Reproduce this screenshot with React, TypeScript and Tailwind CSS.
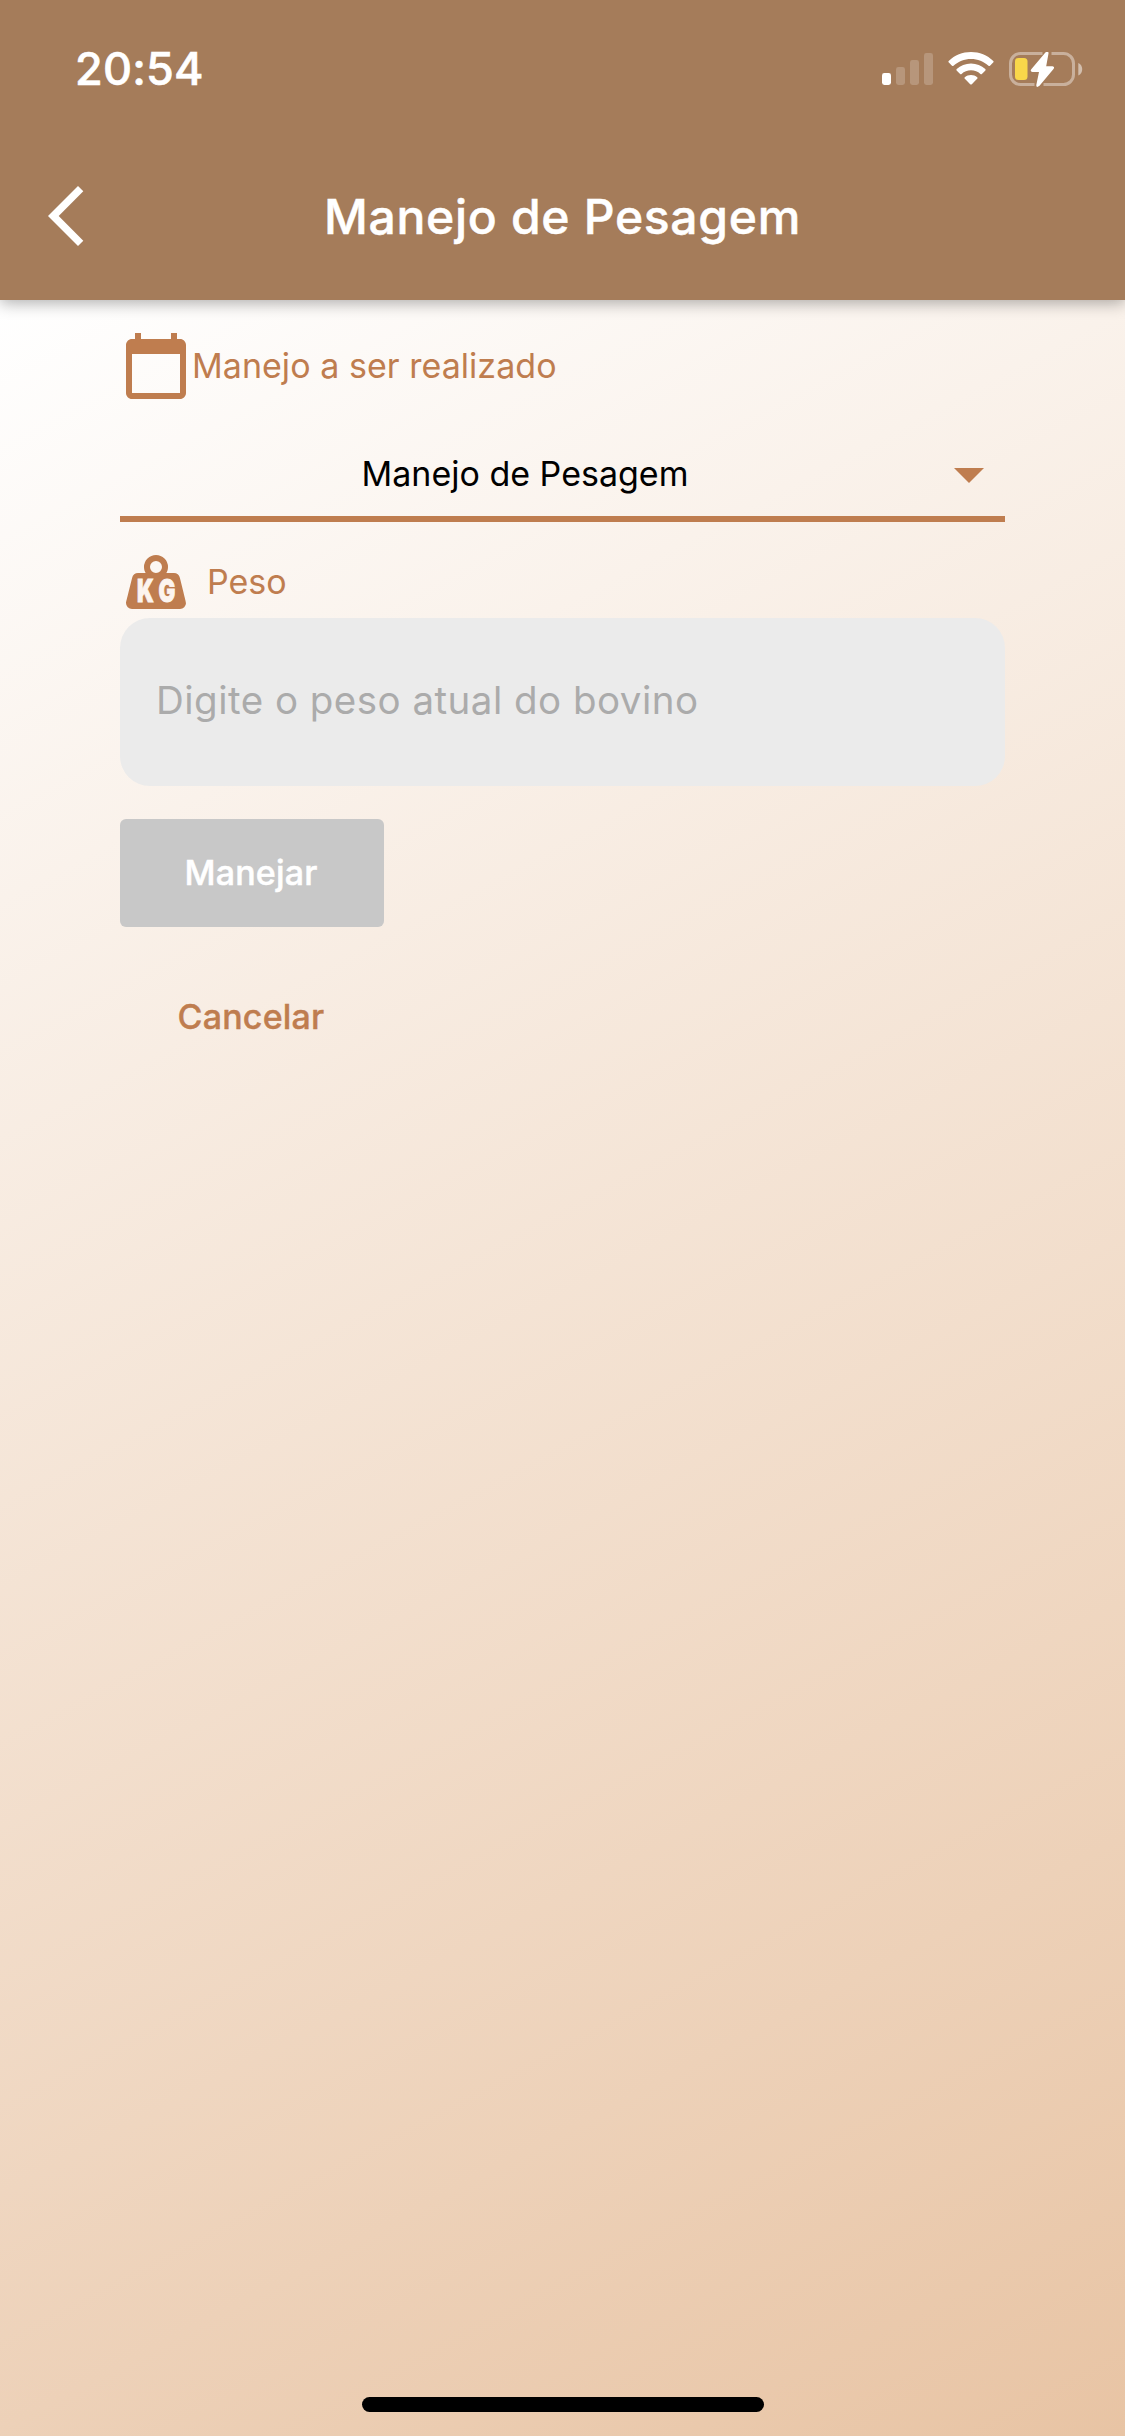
import React from "react";

function StatusIcons() {
  return (
    <div className="flex items-start">
      <svg className="mr-[14px] h-[34px] w-[52px]" viewBox="0 0 52 34">
        <rect x="0" y="21" width="9" height="12" rx="2.4" fill="#fff" />
        <g fill="#fff" fillOpacity="0.2">
          <rect x="14" y="15" width="9" height="18" rx="2.4" />
          <rect x="28" y="8" width="9" height="25" rx="2.4" />
          <rect x="42" y="1" width="9" height="32" rx="2.4" />
        </g>
      </svg>
      <svg className="mr-[14px] h-[34px] w-[47px]" viewBox="0 0 47 34" fill="#fff">
        <path d="M0.6 10.3Q0 9.6 0.7 8.9C6.8 3.2 14.5 0 23 0S39.2 3.2 45.3 8.9Q46 9.6 45.4 10.3L42 13.7Q41.3 14.4 40.5 13.7C35.8 9.4 29.7 6.9 23 6.9S10.2 9.4 5.5 13.7Q4.7 14.4 4 13.7Z" />
        <path d="M8.6 18.4Q8 17.7 8.7 17C12.5 13.5 17.5 11.4 23 11.4S33.5 13.5 37.3 17Q38 17.7 37.4 18.4L33.9 21.9Q33.2 22.5 32.4 21.9C29.9 19.6 26.6 18.3 23 18.3S16.1 19.6 13.6 21.9Q12.8 22.5 12.1 21.9Z" />
        <path d="M16.6 26.6Q16 25.9 16.8 25.3C18.5 23.9 20.6 23 23 23S27.5 23.9 29.2 25.3Q30 25.9 29.4 26.6L23.8 32.2Q23 33 22.2 32.2Z" />
      </svg>
      <svg className="h-[36px] w-[75px]" viewBox="0 0 75 36">
        <g fill="none" stroke="#fff" strokeOpacity="0.4" strokeWidth="3">
          <path d="M33.5 1.5H11.5A10 10 0 0 0 1.5 11.5V22.5A10 10 0 0 0 11.5 32.5H25.5" />
          <path d="M42.5 1.5H54.5A10 10 0 0 1 64.5 11.5V22.5A10 10 0 0 1 54.5 32.5H34.5" />
        </g>
        <path d="M69.3 11C74.5 13 74.5 21.5 69.3 23.5Z" fill="#fff" fillOpacity="0.5" />
        <rect x="6" y="6" width="12.5" height="22" rx="3.5" fill="#f9d74a" />
        <path d="M36.6 0.3Q39.7 -1.5 39.5 1.5L37.2 14.2H43.5Q46 14.6 44.5 17L30.5 33.8Q27.2 36.3 27.3 33L30 20H23.5Q20.7 19.5 22.3 17.3Z" fill="#fff" />
      </svg>
    </div>
  );
}

function BackIcon() {
  return (
    <svg className="h-[60px] w-[36px]" viewBox="0 0 36 60" fill="#fff">
      <path d="M30 0L0 30L30 60L35.3 54.7L10.7 30L35.3 5.3Z" />
    </svg>
  );
}

function CalendarIcon() {
  return (
    <svg className="size-[72px]" viewBox="0 0 24 24" fill="currentColor">
      <path d="M20 3h-1V1h-2v2H7V1H5v2H4c-1.1 0-2 .9-2 2v16c0 1.1.9 2 2 2h16c1.1 0 2-.9 2-2V5c0-1.1-.9-2-2-2zm0 18H4V8h16v13z" />
    </svg>
  );
}

function WeightIcon() {
  return (
    <svg className="size-[72px]" viewBox="0 0 24 24" fill="currentColor">
      <path d="M12 3A4 4 0 0 1 16 7C16 7.73 15.81 8.41 15.46 9H18C18.95 9 19.75 9.67 19.95 10.56C21.96 18.57 22 18.78 22 19A2 2 0 0 1 20 21H4A2 2 0 0 1 2 19C2 18.78 2.04 18.57 4.05 10.56C4.25 9.67 5.05 9 6 9H8.54C8.19 8.41 8 7.73 8 7A4 4 0 0 1 12 3M12 5A2 2 0 0 0 10 7A2 2 0 0 0 12 9A2 2 0 0 0 14 7A2 2 0 0 0 12 5Z" />
      <g className="fill-[#fcf4ef] stroke-[#fcf4ef] font-[Inter] font-black" fontSize="10.4" strokeWidth="0.3">
        <text x="5.7" y="18.8" textLength="5.6" lengthAdjust="spacingAndGlyphs">K</text>
        <text x="12.8" y="18.8" textLength="5.6" lengthAdjust="spacingAndGlyphs">G</text>
      </g>
    </svg>
  );
}

export default function App() {
  return (
    <div className="flex h-[2436px] w-[1125px] flex-col font-[Inter,sans-serif]">
      <header className="relative h-[300px] bg-[#a57c5a] text-white shadow-[0_3px_15px_rgba(0,0,0,0.32)]">
        <div className="flex h-[132px] items-start justify-between pl-[75px] pr-[41px]">
          <span className="mt-[39px] text-[45px] font-medium leading-[60px] tracking-[0.2px] [-webkit-text-stroke:0.6px_currentColor]">20:54</span>
          <div className="mt-[52px]">
            <StatusIcons />
          </div>
        </div>
        <div className="grid h-[168px] grid-cols-[120px_1fr_120px] items-center">
          <button className="ml-[48px]" aria-label="Voltar">
            <BackIcon />
          </button>
          <h1 className="mt-px whitespace-nowrap text-center text-[48px] font-medium leading-[60px] tracking-[0.7px] [-webkit-text-stroke:0.5px_currentColor]">Manejo de Pesagem</h1>
        </div>
      </header>

      <div className="flex flex-1 flex-col bg-[linear-gradient(152.2deg,#ffffff_0%,#e8c4a4_100%)]">
        <main className="flex flex-1 flex-col px-[120px] pt-[30px] text-[34px] leading-[42px] text-[#bf7d4f]">
          <div className="flex h-[72px] items-center">
            <CalendarIcon />
            <span className="tracking-[0.04px]">Manejo a ser realizado</span>
          </div>

          <div className="mt-[30px] flex h-[90px] items-center border-b-[6px] border-[#bf7d4f]">
            <span className="flex-1 pr-[3px] text-center text-black">Manejo de Pesagem</span>
            <svg className="size-[72px]" viewBox="0 0 24 24" fill="currentColor">
              <path d="M7 10l5 5 5-5z" />
            </svg>
          </div>

          <div className="mt-6 flex h-[72px] items-center">
            <WeightIcon />
            <span className="ml-[15px]">Peso</span>
          </div>

          <div className="flex h-[168px] items-center rounded-[30px] bg-[#ebebeb] px-[36px] pb-1 text-[38.5px] tracking-[0.48px] text-[#ababab]">
            Digite o peso atual do bovino
          </div>

          <button className="mt-[33px] h-[108px] w-[264px] rounded-md bg-[#c8c8c8] pr-[2px] font-medium tracking-[0.2px] text-white [-webkit-text-stroke:0.5px_currentColor]">Manejar</button>
          <button className="mt-[36px] h-[108px] w-[264px] pr-[2px] font-medium tracking-[0.2px] [-webkit-text-stroke:0.4px_currentColor]">Cancelar</button>
        </main>

        <footer className="flex justify-center pb-6">
          <div className="h-[15px] w-[402px] rounded-full bg-black" />
        </footer>
      </div>
    </div>
  );
}
